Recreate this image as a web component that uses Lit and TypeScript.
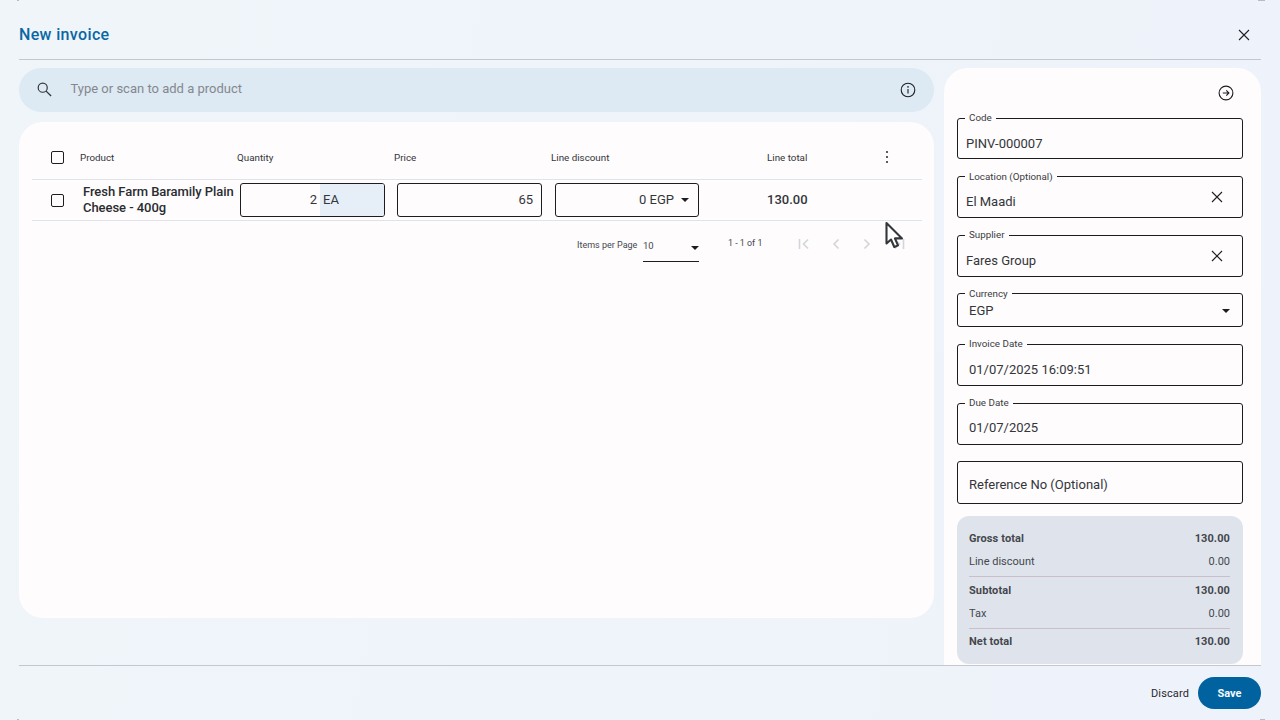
import { LitElement, html, css } from "lit";
import { customElement } from "lit/decorators.js";

const closeIcon = html`<svg class="x" viewBox="0 0 12 12"><path d="M1 1l10 10M11 1L1 11" fill="none" stroke="#1d1f22" stroke-width="1.1"/></svg>`;
const caret = html`<span class="caret"></span>`;
const chev = (d: string) => html`<svg class="pg" viewBox="0 0 16 16"><path d=${d} fill="none" stroke="#d3d5da" stroke-width="1.6"/></svg>`;

@customElement("app-root")
export class AppRoot extends LitElement {
  static styles = css`
    :host { display: block; width: 1280px; height: 720px; overflow: hidden; position: relative;
      font-family: Roboto, "Liberation Sans", sans-serif; color: #1b1d20;
      background: linear-gradient(100deg, #eff5f9, #eef3fb); }
    * { box-sizing: border-box; }
    .page { display: flex; flex-direction: column; height: 720px; padding: 0 19px; }
    .head { height: 60px; flex: none; display: flex; align-items: center; justify-content: space-between;
      border-bottom: 1px solid #c5c7cf; padding: 9px 11px 0 0; }
    .title { font-size: 16px; font-weight: 500; color: #0a66a4; letter-spacing: .35px; margin-top: 1px; }
    .x { width: 11px; height: 11px; display: block; }
    .head .x { width: 12px; height: 12px; margin-top: 1px; }
    .body { flex: 1; min-height: 0; display: flex; gap: 10px; padding-top: 8px; }
    .left { width: 915px; flex: none; display: flex; flex-direction: column; gap: 10px; }
    .search { height: 44px; flex: none; border-radius: 22px; background: #dde9f3; display: flex; align-items: center;
      padding: 0 18px 0 17px; color: #84888e; font-size: 13px; }
    .search .ic { width: 17px; height: 17px; margin-right: 17px; margin-top: -1px; }
    .search span { flex: 1; margin-top: -3px; padding-left: .5px; }
    .info { width: 16px; height: 16px; margin-top: -1px; }
    .table { height: 496px; flex: none; border-radius: 24px; background: #fefcfd; padding: 13px 12px 0 13px; position: relative; }
    .r { display: flex; align-items: center; border-bottom: 1px solid #dfe4ec; }
    .r.th { height: 45px; font-size: 9.8px; color: #33363a; }
    .r.td { height: 41px; font-size: 13px; }
    .c0 { width: 48px; flex: none; padding-left: 19px; }
    .c1, .c2, .c3 { width: 157px; flex: none; }
    .c4 { width: 216px; flex: none; }
    .c5 { width: 119px; flex: none; }
    .td .c1, .td .c2, .td .c3 { padding-left: 3px; }
    .td .c4 { padding-left: 4px; }
    .check { width: 13px; height: 13px; border: 1.2px solid #1b1d20; border-radius: 2px; display: block; }
    .name { font-weight: 500; line-height: 16px; font-size: 13px; letter-spacing: -.05px; color: #2a2c30; }
    .box { width: 145px; height: 34px; border: 1px solid #1b1d20; border-radius: 3px; display: flex; align-items: center;
      justify-content: flex-end; overflow: hidden; font-size: 13px; color: #33363a; padding-right: 8px; margin-top: -1px; }
    .qty { padding: 0; }
    .qty .n { flex: 1; text-align: right; padding-right: 3px; }
    .qty .u { width: 64px; height: 100%; background: #e6eef8; padding-left: 3px; display: flex; align-items: center; }
    .disc { width: 144px; padding-right: 9px; }
    .disc .caret { margin-left: 7px; }
    .caret { width: 0; height: 0; border: 4.5px solid transparent; border-top: 4.5px solid #1b1d20; border-bottom: 0; display: inline-block; flex: none; }
    .total { font-weight: 500; color: #33363a; margin-top: -2px; }
    .kebab { width: 12px; height: 14px; display: block; margin-left: -5.5px; }
    .pager { display: flex; align-items: flex-start; height: 41px; font-size: 10px; color: #45484d; padding: 0 0 0 545px; }
    .ipp { margin-top: 19px; width: 66px; font-size: 9px; }
    .sel { width: 56px; height: 41px; border-bottom: 1px solid #1b1d20; display: flex; justify-content: space-between; padding: 18.5px 0 0 0; font-size: 9.5px; }
    .sel .caret { margin: 6px 0 0; }
    .sel span:first-child { line-height: 12px; }
    .rng { margin: 17px 0 0 29px; width: 68px; font-size: 8.9px; }
    .pgs { display: flex; gap: 15.7px; margin: 15px 0 0 0; }
    .pg { width: 16px; height: 16px; display: block; }
    .side { width: 317px; flex: none; background: #fefcfd; border-radius: 24px 24px 0 0; padding: 0 18px 0 13px;
      display: flex; flex-direction: column; height: 597px; }
    .top { height: 50px; flex: none; display: flex; justify-content: flex-end; align-items: flex-start; padding: 16.5px 9px 0 0; }
    .top svg { width: 16px; height: 16px; display: block; }
    .fields { display: flex; flex-direction: column; gap: 17px; }
    .f { position: relative; height: 42px; border: 1px solid #1b1d20; border-radius: 3px; display: flex; align-items: center;
      padding: 8px 8px 0; font-size: 13px; color: #33363a; justify-content: space-between; }
    .f label { position: absolute; left: 7px; top: -7px; background: #fefcfd; padding: 0 4px; font-size: 9.8px; line-height: 11px; color: #3a3d42; white-space: nowrap; }
    .f.low label { top: -6px; }
    .f.code { height: 41px; padding-top: 10px; }
    .f.cur { height: 34px; padding: 1px 12px 0 11px; }
    .f.date { padding-left: 11px; }
    .f.due { padding-top: 6px; }
    .f.ref { height: 43px; padding-left: 11px; padding-top: 3px; margin-top: -1px; }
    .f .x { margin-right: 11.5px; margin-top: -9px; width: 12px; height: 12px; }
    .fix { margin-top: -1px; }
    .sum { margin-top: 12px; height: 148px; background: #dfe4ec; border-radius: 12px; padding: 13px 13px 0 12px; font-size: 11px; color: #44474d; }
    .s { display: flex; justify-content: space-between; height: 18px; align-items: center; }
    .s.b { font-weight: 700; letter-spacing: .1px; }
    .s.l { margin-top: 5px; height: 18px; }
    .s.n { margin-top: -1px; }
    hr { border: 0; border-top: 1px solid #c9bfca; margin: 6px 0 4px; }
    .foot { height: 55px; flex: none; border-top: 1px solid #c5c7cf; display: flex; justify-content: flex-end; align-items: center; gap: 9px; padding-top: 0; }
    .disc-btn { font-size: 11px; color: #26282c; letter-spacing: .12px; }
    .save { width: 63px; height: 32px; border-radius: 16px; background: #00639f; color: #f4f8fb; font-size: 11px; font-weight: 700; display: flex; align-items: center; justify-content: center; }
    .cursor { position: absolute; left: 884px; top: 221px; width: 20px; height: 28px; }
    .bit { position: absolute; height: 1px; background: #b9bcc0; }
    .bit.a { left: 17px; top: 0; width: 2px; }
    .bit.b { left: 1258px; top: 0; width: 7px; }
    .bit.c { left: 17px; top: 719px; width: 2px; }
    .bit.d { left: 1260px; top: 719px; width: 5px; }
  `;

  render() {
    return html`
      <div class="page">
        <div class="head">
          <div class="title">New invoice</div>
          ${closeIcon}
        </div>
        <div class="body">
          <div class="left">
            <div class="search">
              <svg class="ic" viewBox="0 0 24 24"><circle cx="9.5" cy="9.5" r="6.4" fill="none" stroke="#33363a" stroke-width="1.7"/><path d="M14.3 14.3l7 7" stroke="#33363a" stroke-width="1.9"/></svg>
              <span>Type or scan to add a product</span>
              <svg class="info" viewBox="0 0 16 16"><circle cx="8" cy="8" r="6.8" fill="none" stroke="#1b1d20" stroke-width="1.1"/><path d="M8 7v4.6" stroke="#1b1d20" stroke-width="1.1"/><circle cx="8" cy="4.9" r=".8" fill="#1b1d20"/></svg>
            </div>
            <div class="table">
              <div class="r th">
                <div class="c0"><span class="check"></span></div>
                <div class="c1">Product</div><div class="c2">Quantity</div><div class="c3">Price</div>
                <div class="c4">Line discount</div><div class="c5">Line total</div>
                <svg class="kebab" viewBox="0 0 12 14"><circle cx="6" cy="2" r="1.1" fill="#33363a"/><circle cx="6" cy="7" r="1.1" fill="#33363a"/><circle cx="6" cy="12" r="1.1" fill="#33363a"/></svg>
              </div>
              <div class="r td">
                <div class="c0"><span class="check"></span></div>
                <div class="c1 name">Fresh Farm Baramily Plain Cheese - 400g</div>
                <div class="c2"><div class="box qty"><span class="n">2</span><span class="u">EA</span></div></div>
                <div class="c3"><div class="box">65</div></div>
                <div class="c4"><div class="box disc">0 EGP${caret}</div></div>
                <div class="c5 total">130.00</div>
              </div>
              <div class="pager">
                <div class="ipp">Items per Page</div>
                <div class="sel"><span>10</span>${caret}</div>
                <div class="rng">1 - 1 of 1</div>
                <div class="pgs">
                  ${chev("M3.5 3v10M12 3.5L7.5 8l4.5 4.5")}
                  ${chev("M10.5 3.5L6 8l4.5 4.5")}
                  ${chev("M5.5 3.5L10 8l-4.5 4.5")}
                  ${chev("M4 3.5L8.5 8L4 12.5M12.5 3v10")}
                </div>
              </div>
            </div>
          </div>
          <div class="side">
            <div class="top">
              <svg viewBox="0 0 16 16"><circle cx="8" cy="8" r="6.9" fill="none" stroke="#1b1d20" stroke-width="1.1"/><path d="M4.8 8h6M8.3 5.4L10.9 8l-2.6 2.6" fill="none" stroke="#1b1d20" stroke-width="1.1"/></svg>
            </div>
            <div class="fields">
              <div class="f code"><label>Code</label>PINV-000007</div>
              <div class="f low"><label>Location (Optional)</label>El Maadi${closeIcon}</div>
              <div class="f"><label>Supplier</label>Fares Group${closeIcon}</div>
              <div class="f cur fix low"><label>Currency</label>EGP${caret}</div>
              <div class="f date"><label>Invoice Date</label>01/07/2025 16:09:51</div>
              <div class="f date due"><label>Due Date</label>01/07/2025</div>
              <div class="f ref">Reference No (Optional)</div>
            </div>
            <div class="sum">
              <div class="s b"><span>Gross total</span><span>130.00</span></div>
              <div class="s l"><span>Line discount</span><span>0.00</span></div>
              <hr />
              <div class="s b"><span>Subtotal</span><span>130.00</span></div>
              <div class="s l"><span>Tax</span><span>0.00</span></div>
              <hr />
              <div class="s b n"><span>Net total</span><span>130.00</span></div>
            </div>
          </div>
        </div>
        <div class="foot">
          <span class="disc-btn">Discard</span>
          <span class="save">Save</span>
        </div>
      </div>
      <i class="bit a"></i><i class="bit b"></i><i class="bit c"></i><i class="bit d"></i>
      <svg class="cursor" viewBox="0 0 20 28"><path d="M2.5 2L2.5 22.5L7 18.5L10.3 26L14 24.4L10.9 17.4L18 17.4Z" fill="#fff" stroke="#33363a" stroke-width="2.1" stroke-linejoin="round"/></svg>
    `;
  }
}
